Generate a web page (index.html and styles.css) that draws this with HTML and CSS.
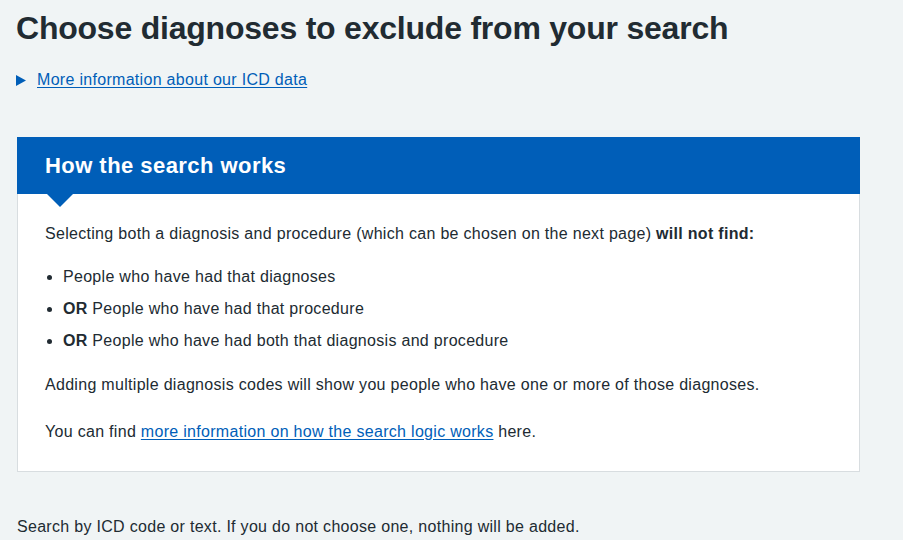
FILE: index.html
```html
<!DOCTYPE html>
<html lang="en">
<head>
<meta charset="utf-8">
<title>Choose diagnoses to exclude from your search</title>
<link rel="stylesheet" href="styles.css">
</head>
<body>
<main class="page">
  <h1 class="page-title">Choose diagnoses to exclude from your search</h1>

  <details class="info-details">
    <summary class="info-summary">
      <svg class="info-arrow" width="10" height="11" viewBox="0 0 10 11" aria-hidden="true"><path d="M0 0 L10 5.5 L0 11 Z" fill="#005eb8"/></svg>
      <span class="info-summary-text">More information about our ICD data</span>
    </summary>
  </details>

  <section class="card">
    <div class="card-heading">
      <h2 class="card-title">How the search works</h2>
      <span class="card-pointer" aria-hidden="true"></span>
    </div>
    <div class="card-body">
      <p class="lead">Selecting both a diagnosis and procedure (which can be chosen on the next page) <strong>will not find:</strong></p>
      <ul class="bullets">
        <li>People who have had that diagnoses</li>
        <li><strong>OR</strong> People who have had that procedure</li>
        <li><strong>OR</strong> People who have had both that diagnosis and procedure</li>
      </ul>
      <p class="spaced">Adding multiple diagnosis codes will show you people who have one or more of those diagnoses.</p>
      <p class="last">You can find <a href="#" class="link">more information on how the search logic works</a> here.</p>
    </div>
  </section>

  <p class="hint">Search by ICD code or text. If you do not choose one, nothing will be added.</p>
</main>
</body>
</html>
```

FILE: styles.css
```css
* {
  box-sizing: border-box;
}

html, body {
  margin: 0;
  padding: 0;
}

body {
  background: #f0f4f5;
  color: #212b32;
  font-family: "Liberation Sans", Arial, sans-serif;
  font-size: 16px;
  line-height: 24px;
  letter-spacing: 0.3px;
}

.page {
  width: 860px;
  padding: 0 0 0 17px;
}

.page-title {
  margin: 8px 0 20px -1px;
  font-size: 32px;
  line-height: 40px;
  font-weight: 700;
  letter-spacing: -0.22px;
}

.info-details {
  margin: 0 0 45px;
}

.info-summary {
  display: flex;
  align-items: center;
  gap: 11px;
  list-style: none;
  cursor: pointer;
}

.info-summary::-webkit-details-marker {
  display: none;
}

.info-arrow {
  flex: none;
  margin: 1px 0 0 -1px;
}

.info-summary-text,
.link {
  color: #005eb8;
  text-decoration: underline;
  text-underline-offset: 2px;
}

.card {
  background: #fff;
  border: 1px solid #d8dde0;
  border-top: 0;
}

.card-heading {
  position: relative;
  background: #005eb8;
  margin: 0 -1px;
  padding: 15px 28px 14px;
}

.card-title {
  margin: 0;
  color: #fff;
  font-size: 22px;
  line-height: 28px;
  font-weight: 700;
  letter-spacing: 0.45px;
}

.card-pointer {
  position: absolute;
  left: 30px;
  bottom: -13px;
  width: 0;
  height: 0;
  border-left: 13px solid transparent;
  border-right: 13px solid transparent;
  border-top: 13px solid #005eb8;
}

.card-body {
  padding: 28px 27px 27px;
}

.card-body p {
  margin: 0;
}

.card-body p.lead {
  margin-bottom: 19px;
}

.card-body p.spaced {
  margin-bottom: 23px;
}

.bullets {
  margin: 0 0 20px;
  padding: 0 0 0 18px;
}

.bullets li {
  margin-bottom: 8px;
}

.bullets li:last-child {
  margin-bottom: 0;
}

.hint {
  margin: 43px 0 0;
}
```
